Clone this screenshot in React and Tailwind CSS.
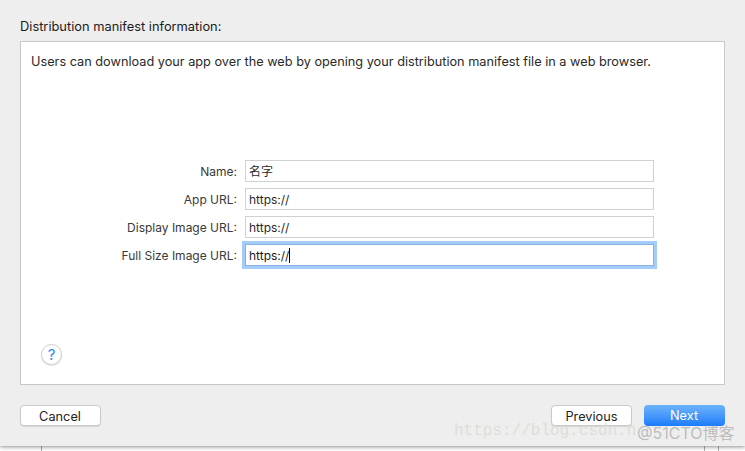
const SANS = "font-['Inter','Liberation_Sans','Noto_Sans_CJK_SC',sans-serif]";

function Field({ label, value, focused }) {
  return (
    <div className="flex items-center h-[22px]">
      <div className="w-[224px] text-right text-[#3a3a3a] pr-[8px] pt-[1px] text-[12px]">{label}</div>
      <div
        className={
          focused
            ? "w-[409px] h-[22px] flex items-center pl-[3px] pt-[1px] bg-white border border-[#86b3e0] outline-[3px] outline-[#a3cdf8] text-[#1a1a1a] text-[12px]"
            : "w-[409px] h-[22px] flex items-center pl-[3px] pt-[1px] bg-white border border-[#d0d0d0] text-[#2a2a2a] text-[12px]"
        }
      >
        {value}
        {focused && <span className="w-px h-[15px] bg-black" />}
      </div>
    </div>
  );
}

export default function App() {
  return (
    <div className={`${SANS} relative w-[745px] h-[451px] overflow-hidden bg-white`}>
      {/* bits of the window behind the sheet */}
      <div className="absolute left-[41px] top-[440px] w-px h-[11px] bg-[#a8a8a8]" />
      <div className="absolute left-[704px] top-[440px] w-px h-[11px] bg-[#b0b0b0]" />
      <div className="absolute left-[718px] top-[440px] w-px h-[11px] bg-[#b0b0b0]" />

      <div className="relative h-[446px] bg-[#eeeeee] shadow-[0_1px_4px_rgba(0,0,0,0.45)] px-[20px] pt-[18px] flex flex-col">
        <div className="h-[23px] text-[12.85px] leading-[17px] text-[#1c1c1c]">Distribution manifest information:</div>

        <div className="h-[344px] bg-white border border-[#c8c8c8] flex flex-col">
          <p className="pt-[11px] pl-[10px] text-[12.73px] leading-[18px] text-[#2a2a2a]">
            Users can download your app over the web by opening your distribution manifest file in a web browser.
          </p>

          <div className="mt-[89px] flex flex-col gap-[6px]">
            <Field label="Name:" value="名字" />
            <Field label="App URL:" value="https://" />
            <Field label="Display Image URL:" value="https://" />
            <Field label="Full Size Image URL:" value="https://" focused />
          </div>

          <button className="mt-[78px] ml-[20px] w-[21px] h-[21px] rounded-full bg-white border border-[#cfcfcf] shadow-[0_1px_1px_rgba(0,0,0,0.12)] flex items-center justify-center text-[15px] leading-none text-[#2f86f5]">
            ?
          </button>
        </div>

        <div className="mt-[20px] flex items-center">
          <button className="w-[81px] h-[21px] pr-[1px] pt-[1px] bg-white rounded-[4px] border border-[#c9c9c9] shadow-[0_1px_1px_rgba(0,0,0,0.1)] text-[12.75px] text-[#222222]">
            Cancel
          </button>
          <div className="ml-auto flex gap-[12px]">
            <button className="w-[81px] h-[21px] pt-[1px] bg-white rounded-[4px] border border-[#c9c9c9] shadow-[0_1px_1px_rgba(0,0,0,0.1)] text-[12.75px] text-[#222222]">
              Previous
            </button>
            <button className="w-[81px] h-[21px] pr-[1px] pt-[1px] rounded-[4px] bg-gradient-to-b from-[#6cb3fa] to-[#1a7bfb] text-[12.75px] text-white">
              Next
            </button>
          </div>
        </div>
      </div>

      {/* watermarks */}
      <div className="absolute left-[454px] top-[421px] font-['Liberation_Mono',monospace] text-[16px] leading-[20px] text-[#deded6] whitespace-nowrap">
        https://blog.csdn.n
      </div>
      <div className="absolute left-[637px] top-[423px] text-[16px] leading-[20px] text-[#9a9a9a]/60 whitespace-nowrap">
        @51CTO博客
      </div>
    </div>
  );
}
